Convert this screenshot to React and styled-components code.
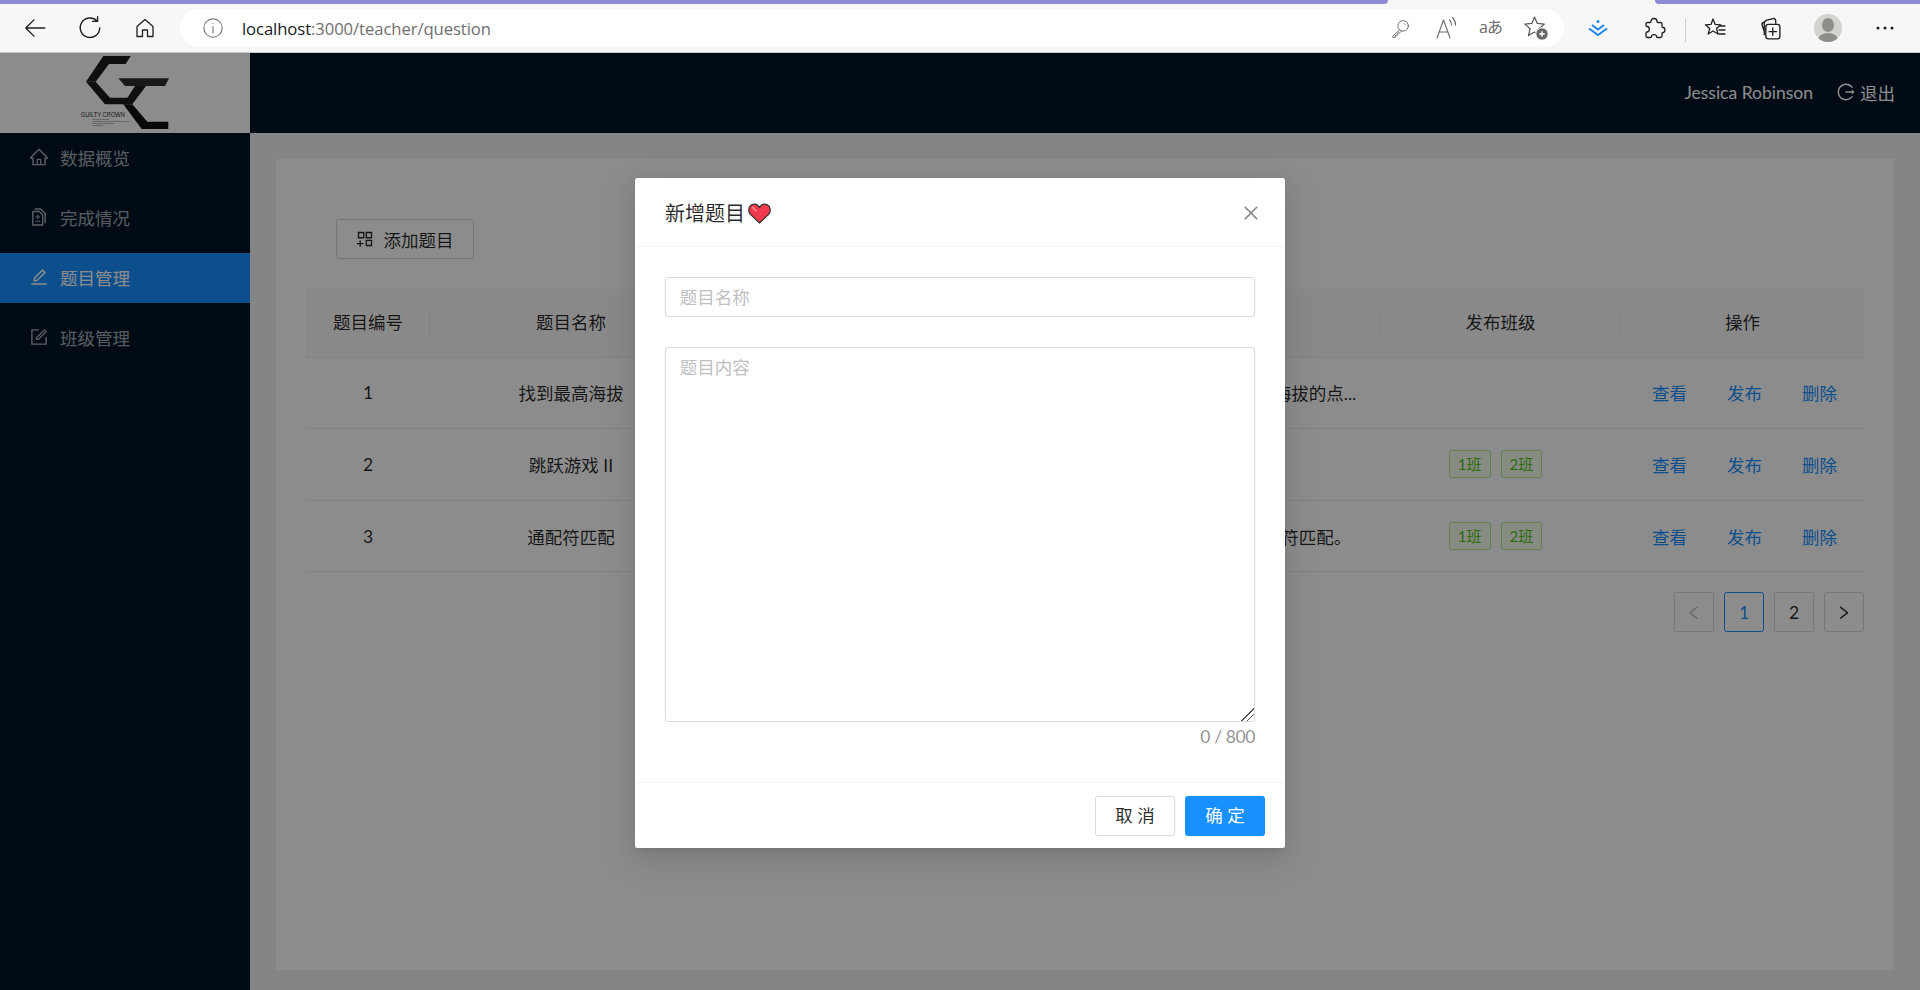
import React from 'react';
import styled, { createGlobalStyle } from 'styled-components';
import {
  AiOutlineHome,
  AiOutlineDiff,
  AiOutlineEdit,
  AiOutlineForm,
  AiOutlineLogout,
  AiOutlineAppstoreAdd,
  AiOutlineClose,
  AiOutlineLeft,
  AiOutlineRight,
} from 'react-icons/ai';

const FONT = `Lato, "Noto Sans CJK SC", sans-serif`;

const GlobalStyle = createGlobalStyle`
  html, body { margin: 0; padding: 0; height: 100%; overflow: hidden; }
  body { font-family: ${FONT}; font-size: 17.5px; color: rgba(0,0,0,.85); background: #f0f2f5; }
  * { box-sizing: border-box; }
`;

/* browser chrome */
const Chrome = styled.div`
  height: 53px;
  background: #f7f7f7;
  border-bottom: 1px solid #c9c9c9;
  position: relative;
  display: flex;
  padding-left: 7.5px;
  color: #1f1f1f;
`;

const TabStrip = styled.div`
  position: absolute;
  top: 0;
  left: 0;
  right: 0;
  height: 4px;
  display: flex;
  justify-content: space-between;
`;

const TabEdge = styled.div`
  height: 4px;
  width: ${p => p.$w}px;
  background: #8f89d8;
  border-bottom-${p => p.$side}-radius: 4px;
`;

const Slot = styled.div`
  width: ${p => p.$w}px;
  flex: none;
  display: flex;
  align-items: center;
  justify-content: center;
  padding-top: 4px;
`;

const AddressBar = styled.div`
  width: 1384px;
  height: 38px;
  margin: 9px 6px 0 7.5px;
  background: #fff;
  border-radius: 19px;
  display: flex;
  align-items: center;
  padding: 0 6px 0 22px;
`;

const Url = styled.div`
  margin-left: 18px;
  font-family: "Open Sans", sans-serif;
  font-size: 16.7px;
  color: #6f6f6f;
  letter-spacing: -0.1px;
  b { font-weight: 400; color: #1a1a1a; }
`;

const AddressTools = styled.div`
  margin-left: auto;
  display: flex;
  color: #6b6b6b;
`;

const PillSlot = styled(Slot)`
  padding-top: 0;
`;

const TranslateGlyph = styled.span`
  font-family: "Open Sans", "Noto Sans CJK JP", sans-serif;
  font-size: 16px;
  line-height: 1;
  color: #6b6b6b;
  letter-spacing: -1px;
  padding-bottom: 3px;
`;

const Divider = styled.div`
  width: 1px;
  height: 24px;
  margin: 18px 0 0 3px;
  background: #cfcfcf;
`;

const Ico = ({ children, size = 24, sw = 1.3 }) => (
  <svg width={size} height={size} viewBox="0 0 24 24" fill="none" stroke="currentColor" strokeWidth={sw} strokeLinecap="round" strokeLinejoin="round">
    {children}
  </svg>
);

/* app shell */
const Page = styled.div`
  position: relative;
  height: 937px;
  display: flex;
  flex-direction: column;
`;

const Header = styled.header`
  height: 80px;
  flex: none;
  background: #001529;
  display: flex;
  align-items: center;
  color: #fff;
`;

const LogoBox = styled.div`
  width: 250px;
  height: 80px;
  background: #fff;
`;

const HeaderUser = styled.div`
  margin-left: auto;
  padding: 0 25px 2px 0;
  display: flex;
  align-items: center;
  svg { margin: 0 4px 0 23px; font-size: 20px; }
`;

const Body = styled.div`
  flex: 1;
  display: flex;
  min-height: 0;
`;

const Sider = styled.nav`
  width: 250px;
  flex: none;
  background: #001529;
  display: flex;
  flex-direction: column;
  gap: 10px;
`;

const MenuItem = styled.div`
  height: 50px;
  display: flex;
  align-items: center;
  gap: 11px;
  padding: 0 0 2px 29px;
  background: ${p => (p.$active ? '#1890ff' : 'transparent')};
  color: ${p => (p.$active ? '#fff' : 'rgba(255,255,255,.65)')};
  svg { font-size: 20px; flex: none; }
`;

const Content = styled.main`
  flex: 1;
  margin: 26px 26px 20px;
  background: #fff;
  padding: 60px 30px 0;
`;

const AddButton = styled.button`
  height: 40px;
  margin: 0 0 30px 30px;
  padding: 0 19px 0 18px;
  display: flex;
  align-items: center;
  gap: 8.5px;
  font: inherit;
  color: rgba(0,0,0,.85);
  background: #fff;
  border: 1px solid #d9d9d9;
  border-radius: 2.5px;
  box-shadow: 0 2px 0 rgba(0,0,0,.015);
  svg { font-size: 20px; }
`;

const Table = styled.table`
  width: 1558px;
  table-layout: fixed;
  border-collapse: collapse;
`;

const Th = styled.th`
  position: relative;
  height: 68px;
  padding: 0 0 2px;
  font-weight: 400;
  text-align: center;
  background: #fafafa;
  border-bottom: 1px solid #f0f0f0;
  &:not(:last-child)::before {
    content: '';
    position: absolute;
    top: 20px;
    right: 0;
    width: 1px;
    height: 28px;
    background: rgba(0,0,0,.06);
  }
`;

const Td = styled.td`
  height: 71.67px;
  padding: 0;
  text-align: center;
  border-bottom: 1px solid #f0f0f0;
`;

const Tag = styled.span`
  display: inline-block;
  height: 28px;
  line-height: 26px;
  padding: 0 8px;
  margin-right: 10px;
  font-size: 15px;
  color: #52c41a;
  background: #f6ffed;
  border: 1px solid #b7eb8f;
  border-radius: 2.5px;
`;

const Actions = styled.div`
  display: flex;
  justify-content: center;
  gap: 40px;
  margin-left: 4px;
`;

const Link = styled.a`
  color: #1890ff;
`;

const Pagination = styled.div`
  margin-top: 20px;
  display: flex;
  justify-content: flex-end;
  gap: 10px;
`;

const PageItem = styled.div`
  width: 40px;
  height: 40px;
  display: flex;
  align-items: center;
  justify-content: center;
  background: #fff;
  border: 1px solid ${p => (p.$active ? '#1890ff' : '#d9d9d9')};
  border-radius: 2.5px;
  color: ${p => (p.$active ? '#1890ff' : p.$disabled ? 'rgba(0,0,0,.25)' : 'rgba(0,0,0,.85)')};
  svg { font-size: 17.5px; }
`;

/* modal */
const Mask = styled.div`
  position: absolute;
  inset: 0;
  background: rgba(0,0,0,.45);
`;

const Modal = styled.div`
  position: absolute;
  top: 125px;
  left: 635px;
  width: 650px;
  background: #fff;
  border-radius: 2.5px;
  box-shadow: 0 4px 8px -5px rgba(0,0,0,.12), 0 8px 20px rgba(0,0,0,.08), 0 11px 35px 10px rgba(0,0,0,.05);
`;

const ModalHead = styled.div`
  height: 69px;
  padding: 2px 24px 0 30px;
  display: flex;
  align-items: center;
  border-bottom: 1px solid #f0f0f0;
  font-size: 20px;
  line-height: 1;
  gap: 3px;
`;

const CloseIcon = styled(AiOutlineClose)`
  margin-left: auto;
  font-size: 20px;
  color: rgba(0,0,0,.45);
`;

const ModalBody = styled.div`
  padding: 30px 30px 31px;
`;

const Input = styled.input`
  display: block;
  width: 100%;
  height: 40px;
  padding: 0 13.75px;
  margin-bottom: 30px;
  font: inherit;
  border: 1px solid #d9d9d9;
  border-radius: 2.5px;
  outline: none;
  &::placeholder { color: #bfbfbf; }
`;

const TextArea = styled.textarea`
  display: block;
  width: 100%;
  height: 375px;
  padding: 6px 13.75px;
  font: inherit;
  line-height: 27.5px;
  border: 1px solid #d9d9d9;
  border-radius: 2.5px;
  outline: none;
  &::placeholder { color: #bfbfbf; }
  &::-webkit-resizer {
    background: linear-gradient(135deg, transparent 56%, #555 56%, #555 62%, transparent 62%, transparent 74%, #555 74%, #555 80%, transparent 80%);
  }
`;

const Count = styled.div`
  text-align: right;
  line-height: 27.5px;
  margin-top: 1px;
  letter-spacing: -0.4px;
  color: rgba(0,0,0,.45);
`;

const ModalFoot = styled.div`
  height: 66px;
  padding: 13px 20px 12px;
  display: flex;
  justify-content: flex-end;
  gap: 10px;
  border-top: 1px solid #f0f0f0;
`;

const FootButton = styled.button`
  width: 80px;
  height: 40px;
  padding: 0 0 2px;
  font: inherit;
  color: ${p => (p.$primary ? '#fff' : 'rgba(0,0,0,.85)')};
  background: ${p => (p.$primary ? '#1890ff' : '#fff')};
  border: 1px solid ${p => (p.$primary ? '#1890ff' : '#d9d9d9')};
  border-radius: 2.5px;
`;

const Logo = () => (
  <svg width="250" height="80" viewBox="0 53 250 80">
    <g transform="translate(60 50) scale(.3333)">
      <g fill="#1c1c1c">
        <polygon points="130,18 212,18 197,42 147,42 107,95 78,95" />
        <polygon points="78,95 107,95 150,143 205,143 195,163 135,163" />
        <polygon points="175,85 327,85 315,108 195,108" fill="#2e2e2e" />
        <polygon points="225,108 258,108 217,163 190,163" />
        <polygon points="190,163 217,163 262,215 325,215 325,237 245,237" fill="#111" />
      </g>
      <text x="62" y="202" fontFamily="Liberation Sans, sans-serif" fontSize="20" fill="#333" textLength="133" lengthAdjust="spacingAndGlyphs">GUILTY CROWN</text>
      <g fill="#777">
        <rect x="97" y="207" width="50" height="1.5" />
        <rect x="97" y="213" width="112" height="1.5" />
        <rect x="97" y="219" width="66" height="1.5" />
        <rect x="97" y="225" width="32" height="1.5" />
      </g>
    </g>
  </svg>
);

const Heart = () => (
  <svg width="23" height="21" viewBox="0 0 23 21">
    <path d="M11.5 20 L2.4 11.4 C-0.4 8.4 0.6 3 4 1.6 C7 0.4 10 1.6 11.5 4.4 C13 1.6 16 0.4 19 1.6 C22.4 3 23.4 8.4 20.6 11.4 Z" fill="#f0394a" stroke="#333" strokeWidth="1.2" strokeLinejoin="round" />
    <path d="M4.6 4.2 C5.6 5.8 6.8 7 8.2 8" stroke="#ff9a9a" strokeWidth="1.4" strokeLinecap="round" fill="none" />
  </svg>
);

const MENU = [
  { icon: AiOutlineHome, label: '数据概览' },
  { icon: AiOutlineDiff, label: '完成情况' },
  { icon: AiOutlineEdit, label: '题目管理', active: true },
  { icon: AiOutlineForm, label: '班级管理' },
];

const ROWS = [
  { id: 1, name: '找到最高海拔', text: '有一个自行车手打算进行一场公路骑行，这条路线总共由 n + 1 个不同海拔的点...', classes: [] },
  { id: 2, name: '跳跃游戏 II', text: '给定一个长度为 n 的 0 索引整数数组 nums。', classes: ['1班', '2班'] },
  { id: 3, name: '通配符匹配', text: '给你一个输入字符串和一个字符模式，请你实现一个支持 ? 和 * 的通配符匹配。', classes: ['1班', '2班'] },
];

const App = () => {
  return (
    <>
      <GlobalStyle />
      <Chrome>
        <TabStrip>
          <TabEdge $w={1388} $side="right" />
          <TabEdge $w={265} $side="left" />
        </TabStrip>
        <Slot $w={55}>
          <Ico size={26}><path d="M21 12H3.5M11 4.5 3.5 12l7.5 7.5" /></Ico>
        </Slot>
        <Slot $w={55}>
          <Ico size={26}><path d="M18.5 5.5A9 9 0 1 0 21 12M19 1.5v4.4h-4.6" /></Ico>
        </Slot>
        <Slot $w={55}>
          <Ico size={24}><path d="M4 10.5 12 3.5l8 7v10h-5.5v-6.5h-5V20.5H4z" /></Ico>
        </Slot>
        <AddressBar>
          <Ico size={22} sw={1.1}>
            <circle cx="12" cy="12" r="10" stroke="#666" />
            <path d="M12 10.5v7M12 6.8v.4" stroke="#666" />
          </Ico>
          <Url><b>localhost</b>:3000/teacher/question</Url>
          <AddressTools>
            <PillSlot $w={45}>
              <Ico size={21} sw={1.1}><circle cx="15" cy="9" r="6" /><path d="M11 13.500 3 21v1h3.500v-2.500H9V17h2l2-2M16.500 6.500l1 1" /></Ico>
            </PillSlot>
            <PillSlot $w={45}>
              <Ico size={24} sw={1.1}><path d="M3 22 9.500 4 16 22M5.500 16h8M15.500 4c1.500 1.500 2 3 2 5M18.500 1.500c2 2 3 4.500 3 7.500" /></Ico>
            </PillSlot>
            <PillSlot $w={45}>
              <TranslateGlyph>aあ</TranslateGlyph>
            </PillSlot>
            <PillSlot $w={45}>
              <svg width="26" height="26" viewBox="0 0 26 26" fill="none" stroke="#555" strokeWidth="1.2" strokeLinejoin="round">
                <path d="M11.500 2l2.800 6.400 7 .7-5.300 4.600 1.600 6.800-6.100-3.500-6 3.500 1.600-6.800-5.300-4.600 7-.7z" />
                <circle cx="19" cy="19" r="6.200" fill="#666" stroke="#fff" strokeWidth="1" />
                <path d="M19 16.200v5.600M16.200 19h5.600" stroke="#fff" strokeWidth="1.4" />
              </svg>
            </PillSlot>
          </AddressTools>
        </AddressBar>
        <Slot $w={56}>
          <svg width="20" height="16" viewBox="0 0 20 16" fill="none" stroke="#1a86f0" strokeWidth="2">
            <circle cx="10" cy="1.500" r="1.500" fill="#1a86f0" stroke="none" />
            <path d="M4 5l6 4.500L16 5" />
            <path d="M1 8.500l9 6.500 9-6.500" />
          </svg>
        </Slot>
        <Slot $w={56}>
          <Ico size={24}>
            <path d="M9 5.500c0-4 6-4 6 0 0 .6.4 1 1 1h2.500c1 0 1.500.5 1.500 1.500v2.500c0 .6.4 1 1 1 2.500 0 2.500 5 0 5-.6 0-1 .4-1 1V20c0 1-.5 1.500-1.500 1.500h-3c-.6 0-1-.5-1-1 0-2.500-5-2.500-5 0 0 .5-.4 1-1 1H5.500C4.500 21.500 4 21 4 20v-3c0-.6.5-1 1-1 3 0 3-5.500 0-5.500-.5 0-1-.4-1-1V8c0-1 .5-1.500 1.500-1.500H8c.6 0 1-.4 1-1z" />
          </Ico>
        </Slot>
        <Divider />
        <Slot $w={58}>
          <Ico size={24}>
            <path d="M10 3l2.200 5.400 5.600.4-4.300 3.700 1.500 5.500L10 15l-4.800 3 1.500-5.500L2.400 8.800 8 8.400zM17 10h5M16 14h6M16 18h6" />
          </Ico>
        </Slot>
        <Slot $w={52}>
          <Ico size={25}>
            <path d="M6 18V7c0-1.500 1-2.500 2.500-3l6-1.500c1.500-.4 2.500.5 2.500 2V7M6 15l-2-6c-.5-1.500 0-2.500 1.500-3" />
            <rect x="7.500" y="8" width="13.500" height="14" rx="2.500" />
            <path d="M14.200 11.500v7M10.700 15h7" />
          </Ico>
        </Slot>
        <Slot $w={64}>
          <svg width="28" height="28" viewBox="0 0 28 28">
            <defs>
              <clipPath id="avatar"><circle cx="14" cy="14" r="14" /></clipPath>
            </defs>
            <g clipPath="url(#avatar)">
              <rect width="28" height="28" fill="#d4d2cf" />
              <ellipse cx="14" cy="11" rx="6" ry="7" fill="#8f8d8a" />
              <ellipse cx="14" cy="26" rx="10" ry="7" fill="#8f8d8a" />
            </g>
          </svg>
        </Slot>
        <Slot $w={50}>
          <svg width="18" height="4" viewBox="0 0 18 4" fill="#1f1f1f">
            <circle cx="2" cy="2" r="1.500" />
            <circle cx="9" cy="2" r="1.500" />
            <circle cx="16" cy="2" r="1.500" />
          </svg>
        </Slot>
      </Chrome>

      <Page>
        <Header>
          <LogoBox><Logo /></LogoBox>
          <HeaderUser>
            Jessica Robinson
            <AiOutlineLogout />
            退出
          </HeaderUser>
        </Header>
        <Body>
          <Sider>
            {MENU.map(({ icon: Icon, label, active }) => (
              <MenuItem key={label} $active={active}>
                <Icon />
                {label}
              </MenuItem>
            ))}
          </Sider>
          <Content>
            <AddButton>
              <AiOutlineAppstoreAdd />
              添加题目
            </AddButton>
            <Table>
              <colgroup>
                <col width="124" />
                <col width="282" />
                <col width="668" />
                <col width="241" />
                <col width="243" />
              </colgroup>
              <thead>
                <tr>
                  <Th>题目编号</Th>
                  <Th>题目名称</Th>
                  <Th>题目内容</Th>
                  <Th>发布班级</Th>
                  <Th>操作</Th>
                </tr>
              </thead>
              <tbody>
                {ROWS.map(row => (
                  <tr key={row.id}>
                    <Td>{row.id}</Td>
                    <Td>{row.name}</Td>
                    <Td>{row.text}</Td>
                    <Td>
                      {row.classes.map(c => <Tag key={c}>{c}</Tag>)}
                    </Td>
                    <Td>
                      <Actions>
                        <Link>查看</Link>
                        <Link>发布</Link>
                        <Link>删除</Link>
                      </Actions>
                    </Td>
                  </tr>
                ))}
              </tbody>
            </Table>
            <Pagination>
              <PageItem $disabled><AiOutlineLeft /></PageItem>
              <PageItem $active>1</PageItem>
              <PageItem>2</PageItem>
              <PageItem><AiOutlineRight /></PageItem>
            </Pagination>
          </Content>
        </Body>
        <Mask />
        <Modal>
          <ModalHead>
            新增题目
            <Heart />
            <CloseIcon />
          </ModalHead>
          <ModalBody>
            <Input placeholder="题目名称" />
            <TextArea placeholder="题目内容" />
            <Count>0 / 800</Count>
          </ModalBody>
          <ModalFoot>
            <FootButton>取 消</FootButton>
            <FootButton $primary>确 定</FootButton>
          </ModalFoot>
        </Modal>
      </Page>
    </>
  );
};

export default App;
